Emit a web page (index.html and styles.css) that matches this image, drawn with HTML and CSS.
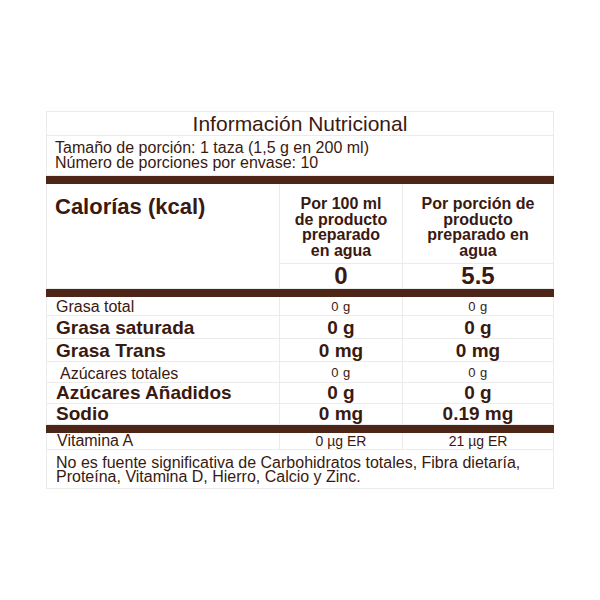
FILE: index.html
```html
<!DOCTYPE html>
<html lang="es">
<head>
<meta charset="utf-8">
<title>Información Nutricional</title>
<link rel="stylesheet" href="styles.css">
</head>
<body>
<div class="page">
  <table class="nut">
    <colgroup>
      <col class="c1"><col class="c2"><col class="c3">
    </colgroup>
    <tr class="title-row"><td colspan="3">Información Nutricional</td></tr>
    <tr class="serving-row"><td colspan="3">Tamaño de porción: 1 taza (1,5 g en 200 ml)<br>Número de porciones por envase: 10</td></tr>
    <tr class="bar"><td colspan="3"></td></tr>
    <tr class="head-row">
      <td class="cal" rowspan="2">Calorías (kcal)</td>
      <td class="head">Por 100 ml<br>de producto<br>preparado<br>en agua</td>
      <td class="head">Por porción de<br>producto<br>preparado en<br>agua</td>
    </tr>
    <tr class="kcal-row"><td class="kv">0</td><td class="kv">5.5</td></tr>
    <tr class="bar"><td colspan="3"></td></tr>
    <tr class="sm r19"><td>Grasa total</td><td class="v">0 g</td><td class="v">0 g</td></tr>
    <tr class="bg r23"><td>Grasa saturada</td><td class="v">0 g</td><td class="v">0 g</td></tr>
    <tr class="bg r23"><td>Grasa Trans</td><td class="v">0 mg</td><td class="v">0 mg</td></tr>
    <tr class="sm r21"><td class="ind">Azúcares totales</td><td class="v">0 g</td><td class="v">0 g</td></tr>
    <tr class="bg r21"><td>Azúcares Añadidos</td><td class="v">0 g</td><td class="v">0 g</td></tr>
    <tr class="bg r20"><td>Sodio</td><td class="v">0 mg</td><td class="v">0.19 mg</td></tr>
    <tr class="bar"><td colspan="3"></td></tr>
    <tr class="vit"><td>Vitamina A</td><td class="v">0 µg ER</td><td class="v">21 µg ER</td></tr>
    <tr class="foot"><td colspan="3">No es fuente significativa de Carbohidratos totales, Fibra dietaría,<br>Proteína, Vitamina D, Hierro, Calcio y Zinc.</td></tr>
  </table>
</div>
</body>
</html>
```

FILE: styles.css
```css
html, body {
  margin: 0;
  padding: 0;
  background: #ffffff;
}
.page {
  padding: 111px 0 0 46px;
  font-family: "Liberation Sans", Arial, sans-serif;
  color: #3a1910;
}
.nut {
  border-collapse: collapse;
  table-layout: fixed;
  width: 507px;
  border: 1px solid #ededed;
}
.c1 { width: 233px; }
.c2 { width: 123px; }
.c3 { width: 151px; }
.nut td {
  border: 1px solid #ebebeb;
  padding: 0;
  box-sizing: border-box;
}
.title-row td {
  height: 23px;
  font-size: 21px;
  line-height: 22px;
  text-align: center;
  padding-top: 1px;
}
.serving-row td {
  height: 40px;
  font-size: 16px;
  line-height: 15px;
  padding: 4px 0 0 8px;
  vertical-align: top;
}
.nut tr.bar td {
  height: 8px;
  background: #4e2617;
  border-color: #4e2617;
  padding: 0;
}
.head-row td {
  height: 80px;
  vertical-align: top;
}
.cal {
  font-weight: bold;
  font-size: 22px;
  line-height: 24px;
  padding: 11px 0 0 8px !important;
}
.head {
  font-weight: bold;
  font-size: 16px;
  line-height: 15.5px;
  text-align: center;
  padding-top: 12px !important;
}
.kcal-row td {
  height: 25px;
}
.kv {
  font-weight: bold;
  font-size: 24px;
  line-height: 24px;
  text-align: center;
  vertical-align: bottom;
}
.r19 td { height: 19px; }
.r20 td { height: 20px; }
.r21 td { height: 21px; }
.r23 td { height: 23px; }
.sm td {
  font-size: 16px;
  line-height: 17px;
  padding-left: 9px;
  vertical-align: bottom;
}
.sm td.v {
  font-size: 13px;
  letter-spacing: 0.5px;
  padding-left: 0;
  text-align: center;
  vertical-align: middle;
}
.sm td.ind { padding-left: 13px; }
.bg td {
  font-weight: bold;
  font-size: 19px;
  line-height: 20px;
  padding-left: 9px;
  vertical-align: bottom;
}
.bg td.v {
  padding-left: 0;
  text-align: center;
}
.vit td {
  height: 17px;
  font-size: 16px;
  line-height: 16px;
  padding-left: 10px;
  vertical-align: bottom;
}
.vit td.v {
  font-size: 14px;
  padding-left: 0;
  text-align: center;
}
.foot td {
  height: 39px;
  font-size: 16px;
  line-height: 14px;
  padding: 6px 0 0 9px;
  vertical-align: top;
}
```
